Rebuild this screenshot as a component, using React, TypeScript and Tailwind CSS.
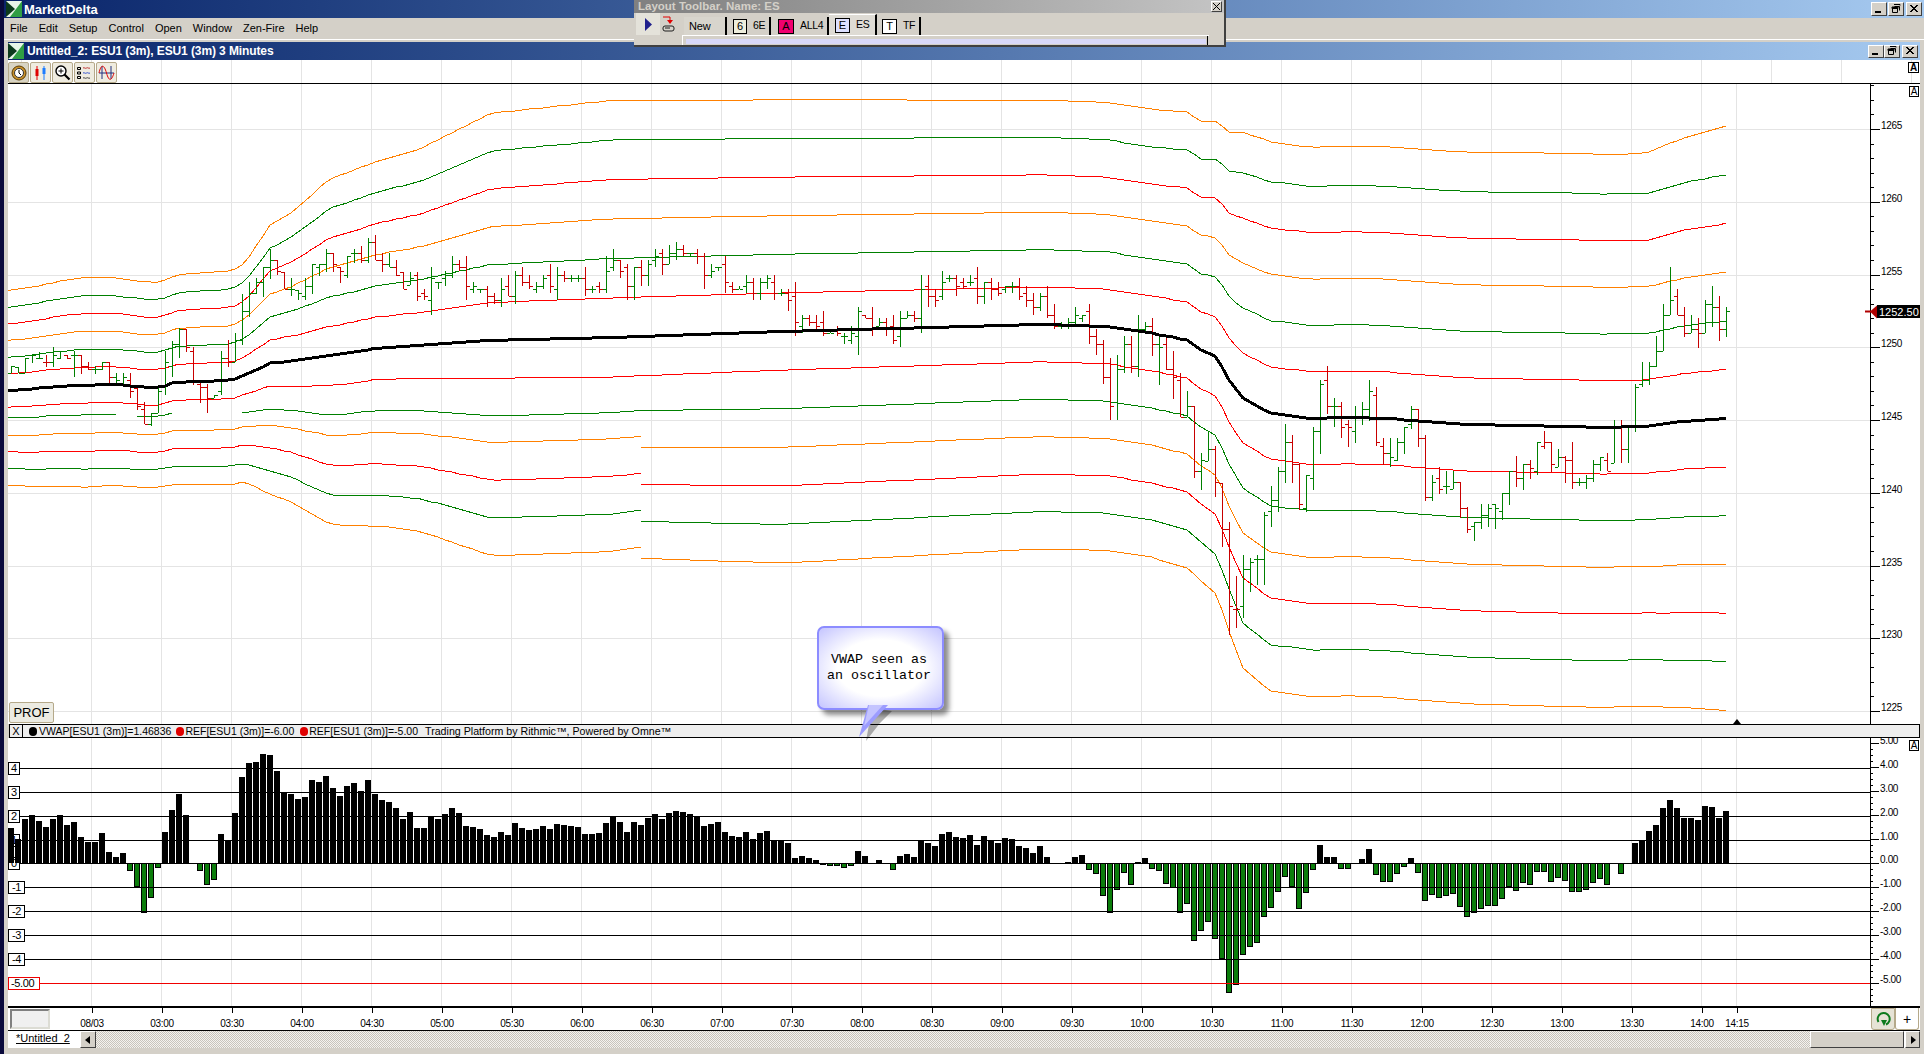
import React from 'react';

// histogram height of every 3 minute bar, px above / below the zero line (24px = 1.0)
const osc = [
  35, 24, 44, 48, 42, 36, 44, 48, 38, 41, 26, 21, 21, 30, 11, 6, 10, -8, -24, -50, -35, -5, 31, 53, 69, 48, 0, -8, -22, -17,
  29, 23, 50, 86, 100, 101, 109, 108, 92, 71, 69, 64, 66, 83, 81, 87, 75, 67, 77, 80, 72, 83, 69, 63, 61, 55, 44, 51, 35, 35,
  47, 44, 49, 55, 50, 37, 36, 34, 28, 26, 31, 28, 40, 35, 33, 34, 37, 34, 39, 38, 37, 36, 29, 29, 30, 40, 47, 41, 31, 41,
  38, 45, 49, 44, 50, 52, 51, 49, 47, 37, 39, 41, 31, 27, 26, 31, 24, 30, 32, 23, 23, 20, 5, 7, 5, 3, -2, -3, -3, -5,
  -3, 12, 7, 0, 3, -1, -7, 7, 9, 6, 23, 20, 17, 29, 31, 26, 25, 28, 18, 27, 23, 20, 25, 24, 17, 15, 10, 17, 6, 0,
  0, 1, 6, 8, -7, -11, -33, -50, -27, -10, -22, 1, 5, -6, -8, -21, -25, -50, -41, -78, -68, -59, -76, -96, -130, -122, -92, -84, -80, -54,
  -45, -29, -14, -24, -46, -30, -7, 18, 6, 6, -6, -6, 0, 4, 14, -12, -19, -19, -11, -4, 5, -10, -38, -32, -35, -33, -31, -44, -54, -50,
  -46, -43, -43, -36, -24, -28, -20, -22, -9, -9, -19, -15, -18, -29, -29, -27, -20, -16, -22, 0, -11, -1, 20, 23, 32, 38, 55, 63, 55, 45,
  45, 43, 57, 56, 45, 52,
];

// traced bars: [top, bottom, green?] in 1/3 px from a base y, first bar index given
const tracedBars: { start: number; base: number; rows: number[][] }[] = [
  {
    start: 0,
    base: 220,
    rows: [
      [440, 460, 1], [440, 460, 1], [415, 460, 1], [405, 430, 1], [395, 418, 1], [405, 440, 0], [382, 440, 1], [395, 418, 1], [405, 418, 0], [392, 470, 1],
      [405, 462, 0], [427, 450, 0], [438, 462, 1], [427, 450, 1], [427, 492, 0], [460, 492, 1], [460, 492, 1], [460, 535, 0], [505, 570, 0], [547, 603, 0],
      [580, 617, 1], [505, 580, 1], [392, 525, 1], [362, 470, 1], [325, 415, 1], [328, 395, 0], [380, 495, 0], [485, 548, 0], [492, 580, 0], [525, 535, 1],
      [393, 525, 1], [360, 440, 0], [340, 425, 1], [222, 375, 1], [187, 290, 1], [175, 222, 1], [142, 230, 1], [88, 178, 1], [120, 165, 0], [155, 208, 0],
      [175, 228, 1], [210, 240, 1], [175, 240, 1], [142, 222, 1], [132, 168, 1], [88, 155, 1], [100, 155, 0], [142, 188, 0], [120, 175, 1], [88, 130, 1],
      [78, 130, 0], [55, 130, 1], [45, 120, 0], [100, 155, 0], [100, 142, 1], [120, 168, 0], [155, 208, 0], [155, 195, 1], [155, 242, 0],
    ],
  },
  {
    start: 163,
    base: 270,
    rows: [
      [145, 258, 0], [198, 345, 1], [198, 300, 0], [243, 387, 0], [310, 440, 0], [363, 440, 1], [408, 625, 0], [550, 660, 1], [482, 572, 1], [528, 680, 0],
      [640, 832, 0], [757, 1095, 0], [918, 1073, 0], [855, 1045, 1], [865, 965, 1], [855, 945, 1], [725, 945, 1], [648, 770, 1], [592, 725, 1], [462, 638, 1],
      [495, 638, 0], [580, 720, 0], [625, 725, 1], [472, 660, 1], [330, 552, 1], [288, 432, 0], [385, 472, 1], [397, 505, 0], [450, 530, 0], [408, 518, 1],
      [395, 465, 1], [330, 452, 1], [352, 528, 0], [505, 585, 0], [505, 592, 1], [505, 572, 1], [472, 552, 1], [408, 478, 1], [418, 530, 0], [495, 692, 0],
      [615, 692, 1], [590, 672, 0], [603, 672, 1], [603, 658, 1], [635, 745, 0], [712, 790, 0], [757, 812, 1], [703, 778, 1], [703, 770, 1], [703, 778, 1],
      [670, 750, 1], [615, 705, 1], [558, 650, 0], [592, 660, 1], [570, 628, 0], [518, 615, 1], [483, 538, 0], [517, 605, 0], [538, 592, 1], [558, 638, 0],
    ],
  },
  {
    start: 229,
    base: 250,
    rows: [
      [510, 640, 1], [510, 640, 0], [535, 640, 1], [403, 545, 1], [335, 412, 1], [337, 405, 1], [258, 350, 1], [162, 303, 1], [52, 195, 1], [118, 185, 0],
      [172, 260, 0], [195, 250, 1], [205, 293, 0], [150, 250, 1], [108, 230, 1], [138, 272, 0], [172, 260, 1],
    ],
  },
];

const vwapPts = [
  [8, 390], [33, 389], [50, 387], [77, 385], [113, 384], [143, 387], [160, 387], [177, 382], [200, 381], [233, 380], [250, 373],
  [270, 363], [300, 360], [350, 353], [377, 348], [420, 345], [491, 340], [614, 337], [785, 331], [859, 329], [1043, 324],
  [1104, 326], [1129, 330], [1150, 333], [1187, 340], [1200, 350], [1217, 357], [1230, 382], [1243, 398], [1270, 413],
  [1310, 418], [1350, 417], [1385, 418], [1420, 421], [1465, 424], [1515, 425], [1570, 426], [1600, 427], [1650, 426],
  [1665, 424], [1685, 421], [1727, 418],
];

const sdPts = [
  [8, 16.6], [85, 17.9], [160, 17.5], [185, 18], [230, 18.2], [245, 18.7], [270, 23], [290, 24.6], [330, 29.5], [420, 32.7],
  [491, 37.8], [614, 39.5], [785, 38.6], [1043, 37.4], [1150, 37.3], [1200, 38.3], [1217, 39.7], [1230, 42], [1243, 45],
  [1270, 46.3], [1570, 46.7], [1650, 46.6], [1668, 47.3], [1727, 48.7],
];

const lowerScalePts = [[8, 1], [491, 1], [641, 0.94], [785, 1], [1727, 1]];
// the top orange band sits closer to its neighbour after the 10:30 drop
const topBandPts = [[8, 0], [1190, 0], [1280, 7], [1630, 7], [1700, 2], [1727, 0]];

function interp(pts: number[][], x: number) {
  for (let i = 1; i < pts.length; i++) {
    if (x <= pts[i][0]) {
      const [x0, y0] = pts[i - 1];
      const [x1, y1] = pts[i];
      return y0 + ((y1 - y0) * (x - x0)) / (x1 - x0);
    }
  }
  return pts[pts.length - 1][1];
}

const barX = (i: number) => 11 + i * 7;
const samples = [8, ...osc.map((_, i) => barX(i))];

function bandPath(k: number, from: number, to: number, leftPart = false) {
  // k > 0 is above the vwap, k < 0 below; left of 640 the outer lower ones sit a little closer
  const pts = samples.filter((x) => x >= from && x <= to).map((x) => {
    let sd = interp(sdPts, x);
    if (k < -1) sd *= interp(lowerScalePts, x);
    let off = k * sd;
    if (k <= -3 && leftPart) off += 0.3 * sd;
    if (k === -2 && x < 180) off += 6;
    if (k === 6) off -= interp(topBandPts, x);
    return `${x},${Math.round(interp(vwapPts, x) - off)}`;
  });
  return 'M' + pts.join('L');
}

const bandColor: Record<number, string> = { 1: '#ff0000', 2: '#008000', 3: '#ff8000', 4: '#ff0000', 5: '#008000', 6: '#ff8000' };

const snap = (y: number) => Math.round(Math.round((y - 129) / 3.64) * 3.64 + 129);

function buildBars() {
  let seed = 4711;
  const rnd = () => {
    seed = (seed * 16807) % 2147483647;
    return seed / 2147483647;
  };
  const traced: Record<number, number[]> = {};
  tracedBars.forEach((t) => {
    t.rows.forEach((r, j) => {
      traced[t.start + j] = [t.base + r[0] / 3, t.base + r[1] / 3, r[2]];
    });
  });
  let up = '';
  let down = '';
  let prev = 0;
  osc.forEach((h, i) => {
    const x = barX(i);
    const close = snap(interp(vwapPts, x) - (h / 24) * interp(sdPts, x));
    const t = traced[i];
    let open = i === 0 ? close + 7 : snap(prev + (rnd() - 0.5) * 6);
    const amp = 5 + Math.abs(close - open) * 0.55;
    let high = snap(Math.min(open, close) - 1 - rnd() * amp);
    let low = snap(Math.max(open, close) + 1 + rnd() * amp);
    let green = close <= open;
    if (t) {
      high = Math.round(Math.min(t[0], close));
      low = Math.round(Math.max(t[1], close));
      open = Math.min(low, Math.max(high, open));
      green = t[2] === 1;
    }
    const d = `M${x + 0.5},${high}V${low}M${x - 3},${open + 0.5}H${x}M${x + 1},${close + 0.5}H${x + 4}`;
    if (green) up += d;
    else down += d;
    prev = close;
  });
  return { up, down };
}

const bars = buildBars();
const gridX = Array.from({ length: 24 }, (_, i) => 91 + i * 70).concat(1736);
const times = ['08/03', '03:00', '03:30', '04:00', '04:30', '05:00', '05:30', '06:00', '06:30', '07:00', '07:30', '08:00', '08:30', '09:00', '09:30', '10:00', '10:30', '11:00', '11:30', '12:00', '12:30', '13:00', '13:30', '14:00', '14:15'];
const prices = [1265, 1260, 1255, 1250, 1245, 1240, 1235, 1230, 1225];
const priceY = (p: number) => Math.round(129 + ((1265 - p) * 582) / 40);
const oscY = (v: number) => (v > 0 ? 864 - v * 24 : 863 - v * 24);
const oscLevels = [4, 3, 2, 1, 0, -1, -2, -3, -4];

function WinBtn({ kind, className }: { kind: 'min' | 'max' | 'close'; className: string }) {
  return (
    <div className={`flex items-center justify-center border border-t-white border-l-white border-r-[#404040] border-b-[#404040] bg-[#d4d0c8] ${className}`}>
      <svg width="10" height="10" viewBox="0 0 10 10">
        {kind === 'min' && <rect x="1" y="7" width="6" height="2" fill="#000" />}
        {kind === 'max' && <path d="M3.5 2.5h5v4M3 .5h6v1M1.5 3.5h5v5h-5zM1 3h6v1.5H1z" fill="none" stroke="#000" />}
        {kind === 'close' && <path d="M1 1l7 7M8 1L1 8M2 1l7 7M9 1L2 8" stroke="#000" />}
      </svg>
    </div>
  );
}

function Logo() {
  return (
    <svg width="16" height="16" viewBox="0 0 16 16" className="shrink-0">
      <rect width="16" height="16" fill="#3aa83a" />
      <path d="M16 0L0 16h16z" fill="#2f9e44" />
      <path d="M0 0h6l10 0L4 16H0z" fill="#e8f5e8" />
      <path d="M0 0l9 8-9 8z" fill="#0c3a1c" />
    </svg>
  );
}

function ToolBtn({ children, pressed }: { children: React.ReactNode; pressed?: boolean }) {
  return (
    <div className={`flex h-[21px] w-[21px] items-center justify-center rounded-[2px] border border-[#b5a98a] ${pressed ? 'bg-[#d8d4c4]' : 'bg-[#efece0]'}`}>
      {children}
    </div>
  );
}

function LayoutTab({ box, boxClass, label, className }: { box: string; boxClass: string; label: string; className: string }) {
  return (
    <div className={`flex items-center border-r-2 border-r-black ${className}`}>
      <span className={`flex h-[15px] items-center justify-center border border-black text-[11px] leading-none ${boxClass}`}>{box}</span>
      <span className="ml-[6px] text-[10.5px] tracking-[-0.3px]">{label}</span>
    </div>
  );
}

function Dot({ color }: { color: string }) {
  return <span className={`inline-block h-[9px] w-[8px] rounded-full ${color}`} />;
}

export default function App() {
  return (
    <div className="relative flex h-[1054px] w-[1924px] overflow-hidden bg-[#d4d0c8] font-['Liberation_Sans',sans-serif] text-black">
      <div className="w-[4px] shrink-0 bg-[#0a0a3c]" />
      <div className="flex min-w-0 flex-1 flex-col">
        {/* main window title */}
        <div className="flex h-[18px] shrink-0 items-center bg-gradient-to-r from-[#0a246a] to-[#a6caf0] pl-[2px] pr-[2px]">
          <Logo />
          <span className="ml-[2px] text-[13px] font-bold leading-none text-white">MarketDelta</span>
          <div className="ml-auto flex gap-[1px]">
            <WinBtn kind="min" className="h-[14px] w-[16px]" />
            <WinBtn kind="max" className="mr-[1px] h-[14px] w-[16px]" />
            <WinBtn kind="close" className="h-[14px] w-[16px]" />
          </div>
        </div>

        <div className="flex h-[21px] shrink-0 items-center gap-[11px] pl-[6px] text-[11px]">
          {['File', 'Edit', 'Setup', 'Control', 'Open', 'Window', 'Zen-Fire', 'Help'].map((m) => (
            <span key={m}>{m}</span>
          ))}
        </div>

        <div className="flex flex-1 flex-col border-t border-t-white pb-[6px] pl-[4px] pr-[4px] pt-[2px]">
          {/* chart window title */}
          <div className="flex h-[18px] shrink-0 items-center bg-gradient-to-r from-[#0a246a] to-[#a6caf0] pr-[2px]">
            <Logo />
            <span className="ml-[3px] text-[12px] font-bold leading-none tracking-[-0.1px] text-white">Untitled_2: ESU1 (3m), ESU1 (3m) 3 Minutes</span>
            <div className="ml-auto flex">
              <WinBtn kind="min" className="h-[13px] w-[16px]" />
              <WinBtn kind="max" className="mr-[2px] h-[13px] w-[16px]" />
              <WinBtn kind="close" className="h-[13px] w-[16px]" />
            </div>
          </div>

          {/* tool row, the chart's grid shows through it */}
          <div className="flex h-[24px] shrink-0 items-start gap-px border-b border-b-black bg-white bg-[linear-gradient(90deg,#e4e4e4_1px,transparent_1px)] bg-[length:70px_100%] bg-[position:13px_0] pt-[2px]">
            <ToolBtn pressed>
              <svg width="16" height="16" viewBox="0 0 16 16">
                <circle cx="8" cy="8" r="7" fill="#c8902a" stroke="#5a3a00" />
                <circle cx="8" cy="8" r="4.5" fill="#fff" stroke="#333" />
                <path d="M8 5v3l2 2" stroke="#000" fill="none" />
              </svg>
            </ToolBtn>
            <ToolBtn>
              <svg width="16" height="16" viewBox="0 0 16 16">
                <path d="M4 1v14" stroke="#e00000" />
                <rect x="2.5" y="4" width="3" height="7" fill="#e00000" />
                <path d="M11 1v14" stroke="#1c7cff" />
                <rect x="9.5" y="3" width="3" height="6" fill="#1c7cff" />
              </svg>
            </ToolBtn>
            <ToolBtn>
              <svg width="17" height="17" viewBox="0 0 17 17">
                <circle cx="7" cy="7" r="5" fill="#fff" stroke="#000" strokeWidth="1.4" />
                <path d="M4.5 7h5M7 4.5v5" stroke="#000" />
                <path d="M10.5 10.5l5 5" stroke="#000" strokeWidth="2.2" />
              </svg>
            </ToolBtn>
            <ToolBtn>
              <svg width="17" height="14" viewBox="0 0 17 14">
                <path d="M1.5 1.5h3v2h-3zM1.5 6h3v2h-3zM1.5 10.5h3v2h-3z" fill="none" stroke="#000" />
                <path d="M7 2c1.5-1 2 1 3.5 0s2 1 3.5 0" stroke="#c03030" fill="none" />
                <path d="M7 7c1.5-1 2 1 3.5 0s2 1 3.5 0" stroke="#3050d0" fill="none" />
                <path d="M7 12c1.5-1 2 1 3.5 0s2 1 3.5 0" stroke="#404040" fill="none" />
              </svg>
            </ToolBtn>
            <ToolBtn>
              <svg width="17" height="15" viewBox="0 0 17 15">
                <path d="M1 8h15M4 1v13M13 1v13" stroke="#203080" />
                <path d="M1 8c2-9 5-9 7.5 0s5 8 7.5 0" stroke="#e00000" fill="none" />
              </svg>
            </ToolBtn>
            <span className="ml-auto mr-[1px] flex h-[11px] w-[11px] items-center justify-center border border-black bg-white text-[10px] font-bold leading-none">A</span>
          </div>

          {/* price pane */}
          <div className="relative h-[640px] shrink-0 bg-white">
            <svg width="1912" height="640" viewBox="8 84 1912 640" className="block text-[10px] tracking-[-0.35px]">
              {gridX.map((x) => (
                <path key={x} d={`M${x + 0.5},84V724`} stroke="#e4e4e4" />
              ))}
              {prices.map((p) => (
                <path key={p} d={`M8,${priceY(p) + 0.5}H1870`} stroke="#e4e4e4" />
              ))}
              <g fill="none" shapeRendering="crispEdges" strokeWidth="1">
                {[6, 5, 4, 3, 2, 1].map((k) => (
                  <path key={k} d={bandPath(k, 0, 2000)} stroke={bandColor[k]} />
                ))}
                <path d={bandPath(-1, 0, 2000)} stroke={bandColor[1]} />
                <path d={bandPath(-2, 0, 120)} stroke={bandColor[2]} />
                <path d={bandPath(-2, 134, 173)} stroke={bandColor[2]} />
                <path d={bandPath(-2, 241, 2000)} stroke={bandColor[2]} />
                {[3, 4, 5, 6].map((k) => (
                  <g key={k}>
                    <path d={bandPath(-k, 0, 641, true)} stroke={bandColor[k]} />
                    <path d={bandPath(-k, 641, 2000)} stroke={bandColor[k]} />
                  </g>
                ))}
              </g>
              <g fill="none" shapeRendering="crispEdges">
                <path d={bars.down} stroke="#c80000" />
                <path d={bars.up} stroke="#008000" />
              </g>
              <path d={'M' + samples.map((x) => `${x},${Math.round(interp(vwapPts, x))}`).join('L')} fill="none" stroke="#000" strokeWidth="3" shapeRendering="crispEdges" />

              {/* price axis */}
              <path d="M1870.5,84V724" stroke="#000" />
              {Array.from({ length: 44 }, (_, i) => Math.round(129 + (i - 3) * 14.55)).map((y, i) => (
                <path key={i} d={`M1870,${y + 0.5}H${(i - 3) % 5 === 0 ? 1880 : 1874}`} stroke="#000" />
              ))}
              {prices.map((p) => (
                <text key={p} x="1881" y={priceY(p)} fill="#000">{p}</text>
              ))}
              <rect x="1909.5" y="86.5" width="9" height="10" fill="#fff" stroke="#000" />
              <text x="1914" y="95" textAnchor="middle" fill="#000">A</text>

              {/* last price marker */}
              <path d="M1865,311.5h6" stroke="#b00000" strokeWidth="2" />
              <path d="M1870,311.5l7-6v13z" fill="#b00000" />
              <rect x="1877" y="305" width="43" height="13" fill="#000" />
              <text x="1879" y="316" fill="#fff" className="text-[11px] tracking-normal">1252.50</text>
              <path d="M1737,719l-4,5h8z" fill="#000" />
            </svg>
            <div className="absolute left-[1px] top-[618px] flex h-[21px] w-[45px] items-center justify-center rounded-[2px] border border-[#b5a98a] bg-[#ecebe2] text-[13px] leading-none">
              PROF
            </div>
          </div>

          {/* legend */}
          <div className="ml-px flex h-[14px] shrink-0 items-center border-y border-y-black border-r border-r-black border-l border-l-black bg-[#eeeeee] text-[10.5px] leading-none">
            <span className="flex h-full w-[13px] items-center justify-center border-r border-r-black text-[11px]">X</span>
            <span className="ml-[6px] flex items-center gap-[2px]"><Dot color="bg-black" />VWAP[ESU1 (3m)]=1.46836</span>
            <span className="ml-[5px] flex items-center gap-px"><Dot color="bg-[#e00000]" />REF[ESU1 (3m)]=-6.00</span>
            <span className="ml-[6px] flex items-center gap-px"><Dot color="bg-[#e00000]" />REF[ESU1 (3m)]=-5.00</span>
            <span className="ml-[7px] text-[10.65px]">Trading Platform by Rithmic™, Powered by Omne™</span>
          </div>

          {/* oscillator pane */}
          <div className="h-[268px] shrink-0 bg-white">
            <svg width="1912" height="268" viewBox="8 738 1912 268" className="block text-[10px] tracking-[-0.35px]">
              {gridX.map((x) => (
                <path key={x} d={`M${x + 0.5},738V1006`} stroke="#e4e4e4" />
              ))}
              {oscLevels.map((v) => {
                const w = v < 0 ? 16 : 11;
                return (
                  <g key={v}>
                    <rect x="8.5" y={oscY(v) - 5.5} width={w} height="12" fill="#fff" stroke="#000" />
                    <text x={8.5 + w / 2} y={oscY(v) + 4} textAnchor="middle" fill="#000" className="text-[11px]">{v}</text>
                  </g>
                );
              })}
              {osc.map((h, i) =>
                h > 0 ? (
                  <rect key={i} x={barX(i) - 3} y={863 - h} width="6" height={h} fill="#000" />
                ) : h < 0 ? (
                  <rect key={i} x={barX(i) - 2.5} y="863.5" width="5" height={-h - 1} fill="#0b7d0b" stroke="#000" />
                ) : null,
              )}
              {oscLevels.map((v) => (
                <path key={v} d={`M${v < 0 ? 24 : 20},${oscY(v) + 0.5}H1870`} stroke="#000" />
              ))}
              <path d="M40,983.5H1870" stroke="#f00000" />
              <rect x="8.5" y="977.5" width="31" height="12" fill="#fff" stroke="#f00000" />
              <text x="11" y="987" fill="#000" className="text-[11px]">-5.00</text>

              <path d="M1870.5,738V1006" stroke="#000" />
              {Array.from({ length: 45 }, (_, i) => 743 + i * 6).map((y, i) => (
                <path key={i} d={`M1870,${y + 0.5}H${i % 4 === 0 ? 1879 : 1873}`} stroke="#000" />
              ))}
              {[5, 4, 3, 2, 1, 0, -1, -2, -3, -4, -5].map((v) => (
                <text key={v} x={1880} y={oscY(v)} fill="#000">{v.toFixed(2)}</text>
              ))}
              <rect x="1909.5" y="740.5" width="9" height="10" fill="#fff" stroke="#000" />
              <text x="1914" y="749" textAnchor="middle" fill="#000">A</text>
            </svg>
          </div>

          {/* time axis */}
          <div className="flex h-[24px] shrink-0 border-t-2 border-t-black bg-white">
            <div className="ml-[2px] mt-[1px] h-[20px] w-[40px] border-2 border-b-[#dcdcd4] border-l-[#808080] border-r-[#dcdcd4] border-t-[#808080] bg-[#f0f0f0]" />
            <svg width="1820" height="22" viewBox="50 1008 1820 22" className="block text-[10px] tracking-[-0.35px]">
              {gridX.map((x, i) => (
                <g key={x}>
                  <path d={`M${x + 1.5},1008V1013`} stroke="#000" />
                  <text x={x + 1} y="1027" textAnchor="middle" fill="#000">{times[i]}</text>
                </g>
              ))}
            </svg>
            <div className="ml-[1px] flex w-[24px] items-center justify-center rounded-b-[3px] border border-[#b5a98a] bg-[#e6e3d6]">
              <svg width="16" height="16" viewBox="0 0 16 16">
                <path d="M3.5 11A6 6 0 1 1 11 13.5" fill="none" stroke="#0c7a1c" strokeWidth="2" />
                <path d="M6 9h6l-3 6z" fill="#0c7a1c" />
              </svg>
            </div>
            <div className="flex w-[24px] items-center justify-center rounded-b-[3px] border border-t-0 border-[#b5a98a] text-[14px] leading-none">+</div>
          </div>

          {/* sheet tabs */}
          <div className="flex h-[18px] shrink-0 border-t border-t-black bg-white">
            <span className="w-[72px] pl-[8px] text-[11px] leading-[15px] underline">*Untitled_2</span>
            <div className="flex w-[16px] items-center justify-center border border-b-[#404040] border-l-white border-r-[#404040] border-t-white bg-[#d4d0c8]">
              <svg width="6" height="8" viewBox="0 0 6 8"><path d="M5 0v8L0 4z" fill="#000" /></svg>
            </div>
            <div className="flex-1 bg-[repeating-conic-gradient(#c8c4bc_0_25%,#f4f2ee_0_50%)] bg-[length:2px_2px]" />
            <div className="w-[94px] border border-b-[#404040] border-l-white border-r-[#404040] border-t-white bg-[#d4d0c8]" />
            <div className="ml-px flex w-[15px] items-center justify-center border border-b-[#404040] border-l-white border-r-[#404040] border-t-white bg-[#d4d0c8]">
              <svg width="6" height="8" viewBox="0 0 6 8"><path d="M1 0v8l5-4z" fill="#000" /></svg>
            </div>
          </div>
        </div>
      </div>

      {/* floating layout toolbar */}
      <div className="absolute left-[634px] top-0 flex h-[47px] w-[592px] flex-col border-b-2 border-r-2 border-b-[#404040] border-r-[#404040] bg-[#d4d0c8]">
        <div className="flex h-[13px] items-center bg-gradient-to-r from-[#808080] to-[#c4c4c4] pl-[4px] pr-[1px]">
          <span className="text-[11.5px] font-bold leading-none text-[#d4d0c8]">Layout Toolbar. Name: ES</span>
          <div className="ml-auto mr-[1px] flex h-[11px] w-[11px] items-center justify-center border border-b-[#404040] border-l-white border-r-[#404040] border-t-white bg-[#d4d0c8]">
            <svg width="7" height="7" viewBox="0 0 7 7"><path d="M0 0l7 7M7 0L0 7" stroke="#000" /></svg>
          </div>
        </div>
        <div className="flex h-[22px]">
          <div className="ml-[2px] flex w-[24px] items-center justify-center bg-[#e4e2da]">
            <svg width="7" height="13" viewBox="0 0 7 13"><path d="M0 0v13l7-6.5z" fill="#20208c" /></svg>
          </div>
          <div className="ml-[1px] flex w-[16px] items-center justify-center">
            <svg width="14" height="17" viewBox="0 0 14 17">
              <path d="M1 1h7v4" fill="none" stroke="#e00000" />
              <path d="M5 4h6L8 8z" fill="#e00000" />
              <rect x="1" y="10" width="11" height="5" rx="2" fill="#d4d0c8" stroke="#202020" />
              <path d="M3 12h5" stroke="#202020" />
            </svg>
          </div>
          <div className="ml-[7px] mt-[4px] flex h-[18px] w-[43px] items-center border-r-2 border-r-black bg-[#d8d5cd] pl-[5px] text-[11px] tracking-[-0.2px]">New</div>
          <LayoutTab box="6" boxClass="w-[14px] bg-[#eeeedd]" label="6E" className="mt-[4px] h-[18px] w-[44px] pl-[6px]" />
          <LayoutTab box="A" boxClass="w-[16px] bg-[#f0006e]" label="ALL4" className="mt-[4px] h-[18px] w-[58px] pl-[7px]" />
          <LayoutTab box="E" boxClass="w-[15px] bg-[#dde0ff]" label="ES" className="mt-[1px] h-[21px] w-[48px] border-t border-t-white bg-[#dedbd4] pl-[6px]" />
          <LayoutTab box="T" boxClass="w-[15px] bg-white" label="TF" className="mt-[4px] h-[18px] w-[44px] pl-[5px]" />
        </div>
        <div className="ml-[48px] mr-[15px] flex h-[10px] flex-col border-l border-l-white">
          <div className="h-px bg-white" />
          <div className="relative mx-[3px] mt-[3px] h-[5px] bg-[#d8d8f8]">
            <div className="absolute right-[-2px] top-[-3px] h-[9px] w-px bg-black" />
          </div>
        </div>
      </div>

      {/* callout */}
      <div className="absolute left-[817px] top-[626px] flex h-[84px] w-[127px] flex-col items-center justify-center rounded-[7px] border-2 border-[#8c8cff] bg-[radial-gradient(ellipse_at_center,#ffffff_50%,#c4c4ff_100%)] pr-[3px] font-['Liberation_Mono',monospace] text-[13.33px] leading-[16px] shadow-[5px_5px_5px_rgba(0,0,0,0.45)]">
        <span>VWAP seen as</span>
        <span>an oscillator</span>
      </div>
      <svg className="absolute left-[855px] top-[705px]" width="40" height="36" viewBox="0 0 40 36">
        <path d="M14 2l20 3-12 12-14 18z" fill="#000" opacity="0.3" transform="translate(3 1)" />
        <path d="M13 0h20L4 32z" fill="#9c9cff" />
        <path d="M14 0h14L9 21z" fill="#c4c4ff" />
      </svg>
    </div>
  );
}
